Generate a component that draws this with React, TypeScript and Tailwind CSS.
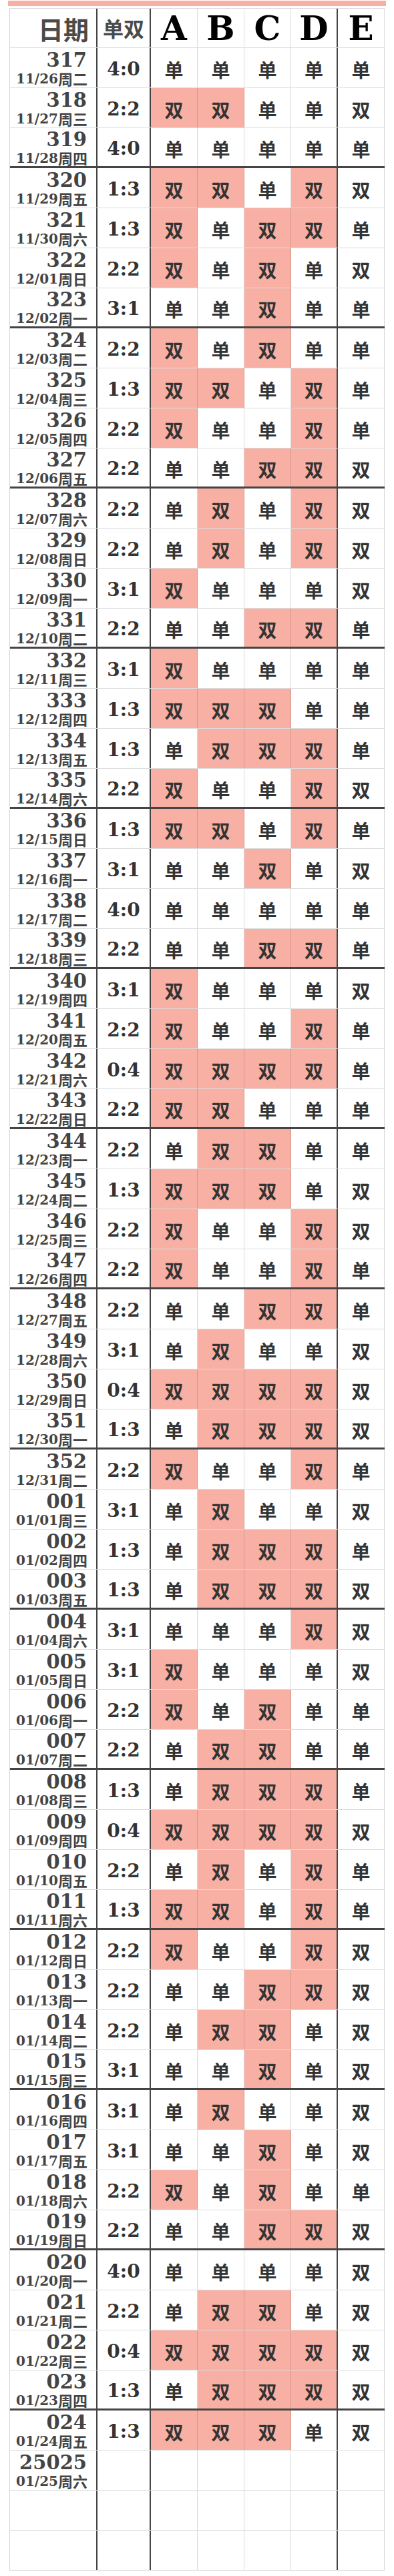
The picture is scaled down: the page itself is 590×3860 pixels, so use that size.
import React from 'react';

// A-E pattern: 1 = 双 (pink), 0 = 单
const rows: [string, string, string][] = [
  ['317', '11/26周二', '00000'],
  ['318', '11/27周三', '11001'],
  ['319', '11/28周四', '00000'],
  ['320', '11/29周五', '11011'],
  ['321', '11/30周六', '10110'],
  ['322', '12/01周日', '10101'],
  ['323', '12/02周一', '00100'],
  ['324', '12/03周二', '10100'],
  ['325', '12/04周三', '11010'],
  ['326', '12/05周四', '10010'],
  ['327', '12/06周五', '00111'],
  ['328', '12/07周六', '01011'],
  ['329', '12/08周日', '01011'],
  ['330', '12/09周一', '10001'],
  ['331', '12/10周二', '00110'],
  ['332', '12/11周三', '10000'],
  ['333', '12/12周四', '11100'],
  ['334', '12/13周五', '01110'],
  ['335', '12/14周六', '10011'],
  ['336', '12/15周日', '11010'],
  ['337', '12/16周一', '00101'],
  ['338', '12/17周二', '00000'],
  ['339', '12/18周三', '00110'],
  ['340', '12/19周四', '10001'],
  ['341', '12/20周五', '10010'],
  ['342', '12/21周六', '11110'],
  ['343', '12/22周日', '11000'],
  ['344', '12/23周一', '01100'],
  ['345', '12/24周二', '11101'],
  ['346', '12/25周三', '10011'],
  ['347', '12/26周四', '10010'],
  ['348', '12/27周五', '00110'],
  ['349', '12/28周六', '01001'],
  ['350', '12/29周日', '11111'],
  ['351', '12/30周一', '01111'],
  ['352', '12/31周二', '10010'],
  ['001', '01/01周三', '01001'],
  ['002', '01/02周四', '01110'],
  ['003', '01/03周五', '01111'],
  ['004', '01/04周六', '00011'],
  ['005', '01/05周日', '10001'],
  ['006', '01/06周一', '10100'],
  ['007', '01/07周二', '01100'],
  ['008', '01/08周三', '01110'],
  ['009', '01/09周四', '11111'],
  ['010', '01/10周五', '01010'],
  ['011', '01/11周六', '11010'],
  ['012', '01/12周日', '10011'],
  ['013', '01/13周一', '00111'],
  ['014', '01/14周二', '01101'],
  ['015', '01/15周三', '00101'],
  ['016', '01/16周四', '01001'],
  ['017', '01/17周五', '00101'],
  ['018', '01/18周六', '10100'],
  ['019', '01/19周日', '00111'],
  ['020', '01/20周一', '00001'],
  ['021', '01/21周二', '01101'],
  ['022', '01/22周三', '11111'],
  ['023', '01/23周四', '01111'],
  ['024', '01/24周五', '11101'],
  ['25025', '01/25周六', ''],
  ['', '', ''],
  ['', '', ''],
];

const serif = "font-['DejaVu_Serif',serif]";
const cjk = "font-['Noto_Sans_CJK_SC',sans-serif]";

function ratio(p: string) {
  const ad = p.slice(0, 4);
  const odd = ad.split('').filter((c) => c === '0').length;
  return `${odd}:${4 - odd}`;
}

function Row({ num, date, pat, thick }: { num: string; date: string; pat: string; thick: boolean }) {
  const rowCls = thick ? 'border-b-[3px] border-[#444]' : 'border-b border-[#dcdcdc]';
  return (
    <div className={`flex h-[60px] ${rowCls}`}>
      <div className="w-[131px] shrink-0 border-r-2 border-[#444] flex flex-col items-end justify-center pr-[13px] text-[#444] leading-none">
        {num && <span className={`${serif} font-bold text-[29px] pr-px`}>{num}</span>}
        {date && (
          <span className="mt-[1px] flex items-end font-bold">
            <span className={`${serif} text-[20px]`}>{date.slice(0, 5)}</span>
            <span className={`${cjk} text-[22px] leading-[22px]`}>{date.slice(5)}</span>
          </span>
        )}
      </div>
      <div className={`w-[80px] shrink-0 border-r-2 border-[#444] flex items-center justify-center pt-[4px] ${serif} font-bold text-[28px] text-[#333]`}>
        {pat && ratio(pat)}
      </div>
      {[0, 1, 2, 3, 4].map((i) => {
        const v = pat ? pat[i] : '';
        const pink = v === '1' && i < 4;
        const sep = i === 3 ? 'border-r-2 border-[#444]' : 'border-r border-black/15';
        return (
          <div
            key={i}
            className={`w-[70px] shrink-0 ${sep} flex items-center justify-center pt-[4px] ${cjk} font-bold text-[28px] text-[#333] ${pink ? 'bg-[#f8b0a4]' : ''}`}
          >
            {v === '1' ? '双' : v === '0' ? '单' : ''}
          </div>
        );
      })}
    </div>
  );
}

export default function App() {
  return (
    <div className="w-[590px] bg-white pt-px pb-2">
      <div className="mx-3 h-2 bg-[#f8b0a4]" />
      <div className="mx-[14px] mt-[3px] border-t border-l border-[#d8d8d8]">
        <div className="flex h-[59px] border-b border-[#dcdcdc]">
          <div className={`w-[131px] shrink-0 border-r-2 border-[#444] flex items-center justify-end pr-[11px] ${cjk} font-bold text-[38px] text-[#4a4a4a]`}>
            日期
          </div>
          <div className={`w-[80px] shrink-0 border-r-2 border-[#444] flex items-center justify-center ${cjk} font-bold text-[31px] text-[#4a4a4a]`}>
            单双
          </div>
          {['A', 'B', 'C', 'D', 'E'].map((l, i) => (
            <div
              key={l}
              className={`w-[70px] shrink-0 ${i === 3 ? 'border-r-2 border-[#444]' : 'border-r border-[#dcdcdc]'} flex items-center justify-center ${serif} font-bold text-[50px] text-black`}
            >
              {l}
            </div>
          ))}
        </div>
        {rows.map(([num, date, pat], idx) => (
          <Row key={idx} num={num} date={date} pat={pat} thick={idx % 4 === 2 && idx < 60} />
        ))}
      </div>
    </div>
  );
}
